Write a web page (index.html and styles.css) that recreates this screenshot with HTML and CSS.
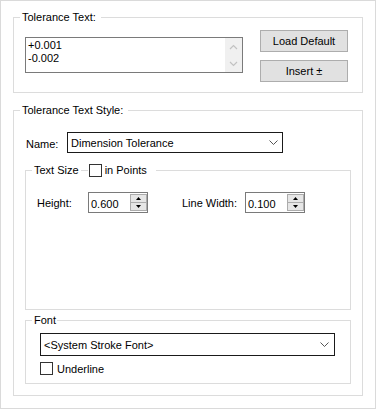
FILE: index.html
```html
<!DOCTYPE html>
<html lang="en">
  <head>
    <meta charset="UTF-8" />
    <meta name="viewport" content="width=device-width, initial-scale=1.0" />
    <title>Tolerance Text</title>
    <link rel="stylesheet" href="styles.css">
  </head>
  <body>
    <div class="dialog">
      <fieldset class="group tol-text">
        <legend>Tolerance Text:</legend>
        <div class="tol-row">
          <div class="memo">
            <div class="memo-lines">+0.001<br>-0.002</div>
            <div class="vscroll">
              <svg width="9" height="6" viewBox="0 0 9 6"><path d="M1 5 L4.5 1.5 L8 5" fill="none" stroke="#c2c2c2" stroke-width="1.2"/></svg>
              <svg width="9" height="6" viewBox="0 0 9 6"><path d="M1 1 L4.5 4.5 L8 1" fill="none" stroke="#c2c2c2" stroke-width="1.2"/></svg>
            </div>
          </div>
          <div class="btn-col">
            <button class="btn">Load Default</button>
            <button class="btn">Insert ±</button>
          </div>
        </div>
      </fieldset>

      <fieldset class="group style">
        <legend>Tolerance Text Style:</legend>
        <div class="name-row">
          <span class="name-label">Name:</span>
          <div class="combo name-combo">
            <span>Dimension Tolerance</span>
            <svg width="9" height="5" viewBox="0 0 9 5"><path d="M0.5 0.5 L4.5 4.5 L8.5 0.5" fill="none" stroke="#555" stroke-width="1"/></svg>
          </div>
        </div>

        <fieldset class="group sub size">
          <legend class="size-legend"><span>Text Size</span><span class="line-bit"></span><span class="check"></span><span class="in-points">in Points</span></legend>
          <div class="size-row">
            <span class="field-label height-label">Height:</span>
            <div class="spin">
              <span class="spin-value">0.600</span>
              <div class="spin-btns">
                <span class="spin-btn"><svg width="5" height="3" viewBox="0 0 5 3"><path d="M2.5 0 L5 3 L0 3 Z" fill="#000"/></svg></span>
                <span class="spin-btn"><svg width="5" height="3" viewBox="0 0 5 3"><path d="M0 0 L5 0 L2.5 3 Z" fill="#000"/></svg></span>
              </div>
            </div>
            <span class="field-label width-label">Line Width:</span>
            <div class="spin">
              <span class="spin-value">0.100</span>
              <div class="spin-btns">
                <span class="spin-btn"><svg width="5" height="3" viewBox="0 0 5 3"><path d="M2.5 0 L5 3 L0 3 Z" fill="#000"/></svg></span>
                <span class="spin-btn"><svg width="5" height="3" viewBox="0 0 5 3"><path d="M0 0 L5 0 L2.5 3 Z" fill="#000"/></svg></span>
              </div>
            </div>
          </div>
        </fieldset>

        <fieldset class="group sub font">
          <legend class="font-legend">Font</legend>
          <div class="combo font-combo">
            <span>&lt;System Stroke Font&gt;</span>
            <svg width="9" height="5" viewBox="0 0 9 5"><path d="M0.5 0.5 L4.5 4.5 L8.5 0.5" fill="none" stroke="#555" stroke-width="1"/></svg>
          </div>
          <div class="check-row">
            <span class="check"></span>
            <span>Underline</span>
          </div>
        </fieldset>
      </fieldset>
    </div>
  </body>
</html>
```

FILE: styles.css
```css
* {
  box-sizing: border-box;
}
body {
  margin: 0;
  background: #fff;
  font-family: "Liberation Sans", Arial, sans-serif;
  font-size: 11px;
  color: #000;
}
.dialog {
  width: 376px;
  height: 409px;
  border: 1px solid #dadada;
  padding: 9px 12px 0 12px;
  background: #fff;
}
.group {
  margin: 0;
  padding: 0;
  border: 1px solid #dcdcdc;
  min-width: 0;
}
/* legends sit inside the padding box, so pull them back to 6px from the frame */
.group legend {
  margin-left: -5px;
  padding: 0 5px 0 2px;
  line-height: 14px;
  height: 14px;
}
.tol-text {
  padding: 6px 14px 10px 11px;
}
.tol-row {
  display: flex;
  align-items: flex-start;
}
.memo {
  margin-top: 7px;
  width: 218px;
  height: 36px;
  border: 1px solid #7a7a7a;
  display: flex;
}
.memo-lines {
  flex: 1;
  padding: 1px 0 0 2px;
  line-height: 13px;
}
.vscroll {
  width: 17px;
  background: #f0f0f0;
  display: flex;
  flex-direction: column;
  align-items: center;
  justify-content: space-between;
  padding: 6px 0 5px;
}
.btn-col {
  margin-left: 17px;
  display: flex;
  flex-direction: column;
  gap: 8px;
}
.btn {
  width: 88px;
  height: 22px;
  background: #e1e1e1;
  border: 1px solid #adadad;
  font-family: inherit;
  font-size: 11px;
  color: #000;
  padding: 0;
}
.style {
  margin-top: 10px;
  padding: 15px 11px 11px 11px;
}
.name-row {
  display: flex;
  align-items: center;
}
.name-label {
  width: 42px;
  padding-top: 3px;
  padding-left: 1px;
}
.combo {
  border: 1px solid #1a1a1a;
  display: flex;
  align-items: center;
  justify-content: space-between;
  padding: 0 4px 0 3px;
  background: #fff;
}
.name-combo {
  width: 216px;
  height: 21px;
}
.size {
  margin-top: 10px;
  padding: 15px 0 96px 11px;
}
.group .size-legend {
  display: flex;
  align-items: center;
  padding-right: 9px;
}
.line-bit {
  width: 7px;
  height: 1px;
  background: #dcdcdc;
  margin: 1px 1px 0 2px;
}
.in-points {
  margin-left: 3px;
}
.check {
  display: inline-block;
  width: 13px;
  height: 13px;
  border: 1px solid #333;
  background: #fff;
}
.size-row {
  display: flex;
  align-items: center;
}
.field-label {
  padding-top: 1px;
}
.height-label {
  width: 51px;
}
.width-label {
  width: 63px;
  margin-left: 34px;
}
.spin {
  width: 60px;
  height: 21px;
  border: 1px solid #7a7a7a;
  display: flex;
  align-items: center;
  justify-content: space-between;
  padding: 1px 0 1px 2px;
}
.spin-value {
  padding-top: 2px;
}
.spin-btns {
  width: 17px;
  height: 100%;
  display: flex;
  flex-direction: column;
}
.spin-btn {
  flex: 1;
  background: #e6e6e6;
  border: 1px solid #acacac;
  display: flex;
  align-items: center;
  justify-content: center;
}
.spin-btn + .spin-btn {
  border-top: none;
}
.font {
  margin-top: 3px;
  padding: 6px 0 8px 14px;
}
.group .font-legend {
  margin-left: -8px;
  padding-right: 1px;
}
.font-combo {
  width: 295px;
  height: 23px;
  padding-right: 5px;
}
.check-row {
  margin-top: 6px;
  display: flex;
  align-items: center;
  gap: 4px;
  height: 13px;
}
```
